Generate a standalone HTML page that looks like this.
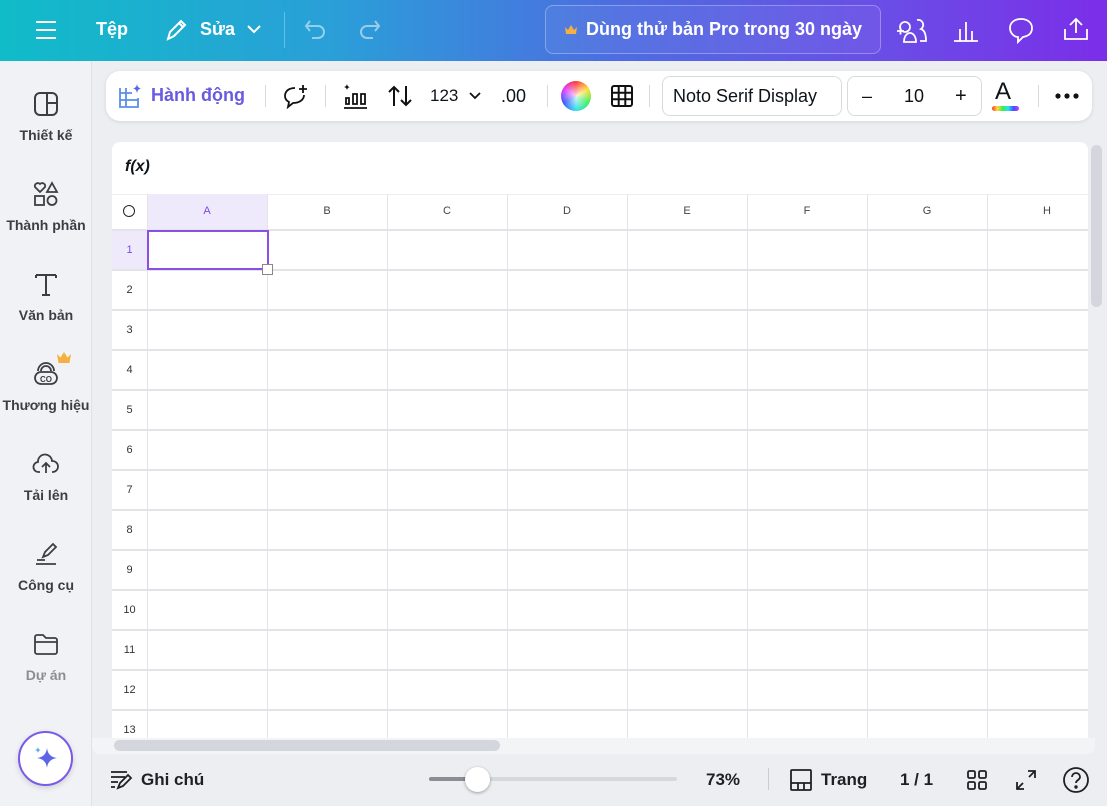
<!DOCTYPE html>
<html><head><meta charset="utf-8"><style>
*{box-sizing:border-box;margin:0;padding:0}
body{width:1107px;height:806px;overflow:hidden;background:#eceef2;font-family:"Liberation Sans","Noto Sans CJK SC",sans-serif;position:relative;color:#0e1318}
.abs{position:absolute}
.top{left:0;top:0;width:1107px;height:61px;background:linear-gradient(90deg,#10bcc8 0%,#2a9fd8 30%,#4c6ee0 55%,#6a4de6 80%,#7b2ee8 100%)}
.top .t{color:#fff;font-weight:bold;font-size:18px}
.side{left:0;top:61px;width:92px;height:745px;background:#f1f2f5;border-right:1px solid #dfe1e6}
.si{width:92px;text-align:center;font-size:14px;color:#3b3f45;font-weight:bold}
.si svg{display:block;margin:0 auto 10px}
.tb{left:106px;top:71px;width:986px;height:50px;background:#fff;border-radius:14px;box-shadow:0 1px 4px rgba(0,0,0,.1)}
.sep{width:1px;height:22px;background:#d8dadf;top:14px}
.card{left:112px;top:142px;width:976px;height:596px;background:#fff;border-radius:8px 8px 0 0;overflow:hidden}
.grid{left:0;top:87px;width:976px;height:520px;
background:repeating-linear-gradient(180deg,#e3e4e7 0 2px,transparent 2px 40px)}
.vl{top:52px;width:1px;height:560px;background:#e3e4e7}
.colh{top:52px;height:35px;width:120px;font-size:11px;color:#444;text-align:center;line-height:35px}
.rn{left:0;width:35px;font-size:11px;color:#333;text-align:center;height:40px;line-height:40px}
.bot{font-size:17px;font-weight:bold;color:#1d2126}
</style></head><body>
<div class="abs top">
 <svg class="abs" style="left:34px;top:19px" width="24" height="22"><path d="M2 3h20M2 11h20M2 19h20" stroke="#fff" stroke-width="2"/></svg>
 <div class="abs t" style="left:96px;top:19px">Tệp</div>
 <svg class="abs" style="left:164px;top:17px" width="24" height="26" fill="none" stroke="#fff" stroke-width="2"><path d="M4 22l2-7L17 4l4 4L10 19z M15 6l4 4"/></svg>
 <div class="abs t" style="left:200px;top:19px">Sửa</div>
 <svg class="abs" style="left:246px;top:24px" width="16" height="10" fill="none" stroke="#fff" stroke-width="2"><path d="M2 2l6 6 6-6"/></svg>
 <div class="abs" style="left:284px;top:12px;width:1px;height:36px;background:rgba(255,255,255,.3)"></div>
 <svg class="abs" style="left:303px;top:18px" width="26" height="24" fill="none" stroke="rgba(255,255,255,.5)" stroke-width="2"><path d="M7 3L3 8l4 5M3 8h12a6 6 0 010 12H9"/></svg>
 <svg class="abs" style="left:356px;top:18px" width="26" height="24" fill="none" stroke="rgba(255,255,255,.5)" stroke-width="2"><path d="M19 3l4 5-4 5M23 8H11a6 6 0 000 12h6"/></svg>
 <div class="abs" style="left:545px;top:5px;width:336px;height:49px;border:1px solid rgba(255,255,255,.3);border-radius:8px;background:rgba(255,255,255,.05)"></div>
 <svg class="abs" style="left:564px;top:24px" width="14" height="12"><path d="M1 3l3 3 3-5 3 5 3-3-1 7H2z" fill="#f5b040"/></svg>
 <div class="abs t" style="left:586px;top:19px">Dùng thử bản Pro trong 30 ngày</div>
 <svg class="abs" style="left:895px;top:15px" width="34" height="30" fill="none" stroke="#fff" stroke-width="1.8"><path d="M2 16h7M5.5 12.5v7M15 12a5 5 0 110-.1M9 27c0-6 3-9 6-9s6 3 6 9zM22 5a5 5 0 014 9c3 1 5 4 5 12h-6"/></svg>
 <svg class="abs" style="left:952px;top:16px" width="28" height="28" fill="none" stroke="#fff" stroke-width="1.8"><path d="M2 25h24M8 25V13M14 25V6M20 25V15"/></svg>
 <svg class="abs" style="left:1007px;top:16px" width="28" height="28" fill="none" stroke="#fff" stroke-width="1.8"><path d="M14 3C7 3 3 7 3 12s4 9 8 9v5l5-5c6-1 9-4 9-9S21 3 14 3z"/></svg>
 <svg class="abs" style="left:1062px;top:15px" width="28" height="28" fill="none" stroke="#fff" stroke-width="1.8"><path d="M14 18V4M8 10l6-6 6 6M3 14v10h22V14"/></svg>
</div>

<div class="abs side">
 <div class="abs si" style="top:30px"><svg width="26" height="26" fill="none" stroke="#3b3f45" stroke-width="2"><rect x="2" y="2" width="22" height="22" rx="5"/><path d="M14 2v22M14 12h10"/></svg>Thiết kế</div>
 <div class="abs si" style="top:120px"><svg width="26" height="26" fill="none" stroke="#3b3f45" stroke-width="1.8"><path d="M7 11L2 6a3 3 0 015-3 3 3 0 015 3z"/><path d="M19 2l5 9H14z"/><rect x="2" y="15" width="9" height="9"/><circle cx="19" cy="19.5" r="4.5"/></svg>Thành phần</div>
 <div class="abs si" style="top:210px"><svg width="26" height="26" fill="none" stroke="#3b3f45" stroke-width="2"><path d="M3 4h20M13 4v20M9 24h8M3 4v3M23 4v3"/></svg>Văn bản</div>
 <svg class="abs" style="left:56px;top:290px" width="16" height="14"><path d="M1 3l3.5 3.5L8 1l3.5 5.5L15 3l-1.5 9h-11z" fill="#f5b040"/></svg>
 <div class="abs si" style="top:300px;left:0"><svg width="26" height="26" fill="none" stroke="#3b3f45" stroke-width="1.8"><path d="M5 10a8 8 0 0116 0M8 10a5 5 0 0110 0"/><rect x="2" y="11" width="22" height="12" rx="6"/><text x="13" y="21" font-size="8" text-anchor="middle" fill="#3b3f45" stroke="none" font-weight="bold" font-family="Liberation Sans">CO</text></svg>Thương hiệu</div>
 <div class="abs si" style="top:390px"><svg width="28" height="26" fill="none" stroke="#3b3f45" stroke-width="1.8"><path d="M8 21H7a5 5 0 01-1-10 7 7 0 0114-1 5 5 0 011 11h-1"/><path d="M14 22v-9M10 16l4-4 4 4"/></svg>Tải lên</div>
 <div class="abs si" style="top:480px"><svg width="28" height="26" fill="none" stroke="#3b3f45" stroke-width="1.8"><path d="M11 16l2-5 8-8 3 3-8 8z"/><path d="M5 19h8M4 23h20"/></svg>Công cụ</div>
 <div class="abs si" style="top:570px;color:#8a8e94"><svg width="26" height="26" fill="none" stroke="#3b3f45" stroke-width="1.8"><path d="M2 6a2 2 0 012-2h6l3 3h9a2 2 0 012 2v12a2 2 0 01-2 2H4a2 2 0 01-2-2zM2 11h22"/></svg>Dự án</div>
 <div class="abs" style="left:18px;top:670px;width:55px;height:55px;border-radius:50%;background:#fff;border:2px solid #7a5ae8;box-shadow:0 2px 6px rgba(0,0,0,.15)"><svg style="margin:12px" width="28" height="28"><path d="M15 3q1 9 10 10q-9 1-10 10q-1-9-10-10q9-1 10-10z" fill="#5a66e6"/><path d="M6 2q.5 3 3 3q-2.5.5-3 3q-.5-2.5-3-3q2.5-.5 3-3z" fill="#5ab0e6"/></svg></div>
</div>

<div class="abs tb">
 <svg class="abs" style="left:12px;top:12px" width="26" height="26" fill="none" stroke="#5a8ee6" stroke-width="1.8"><path d="M2 5v19h18V15M2 10h12M2 17h18M8 5v19"/><path d="M19 1q.5 4 4 4.5q-3.5.5-4 4.5q-.5-4-4-4.5q3.5-.5 4-4.5z" fill="#5a66e6" stroke="none"/></svg>
 <div class="abs" style="left:45px;top:14px;font-size:18px;font-weight:bold;color:#6a5ae0">Hành động</div>
 <div class="abs sep" style="left:159px"></div>
 <svg class="abs" style="left:176px;top:12px" width="28" height="28" fill="none" stroke="#111" stroke-width="1.8"><path d="M13 5C7 5 3 8 3 13c0 3 2 5 4 6l-1 5 5-4c6 0 11-3 11-8"/><path d="M21 2v8M17 6h8"/></svg>
 <div class="abs sep" style="left:219px"></div>
 <svg class="abs" style="left:235px;top:11px" width="28" height="28" fill="none" stroke="#111" stroke-width="1.8"><path d="M3 26h23M5 22v-6h3v6zM12 22V12h4v10zM20 22V12h4v10z"/><path d="M6 2q.5 3 3 3q-2.5.5-3 3q-.5-2.5-3-3q2.5-.5 3-3z" fill="#111" stroke="none"/></svg>
 <svg class="abs" style="left:281px;top:13px" width="26" height="24" fill="none" stroke="#111" stroke-width="2"><path d="M7 22V3M2 8l5-5 5 5M19 2v19M14 16l5 5 5-5"/></svg>
 <div class="abs" style="left:324px;top:15px;font-size:17px">123</div>
 <svg class="abs" style="left:363px;top:21px" width="12" height="8" fill="none" stroke="#111" stroke-width="1.8"><path d="M1 1l5 5 5-5"/></svg>
 <div class="abs" style="left:395px;top:15px;font-size:18px">.00</div>
 <div class="abs sep" style="left:441px"></div>
 <div class="abs" style="left:455px;top:10px;width:30px;height:30px;border-radius:50%;background:conic-gradient(#f33,#fd3,#3e5,#3de,#35f,#d3f,#f33)"><div style="width:100%;height:100%;border-radius:50%;background:radial-gradient(circle,rgba(255,255,255,.8),rgba(255,255,255,0) 70%)"></div></div>
 <svg class="abs" style="left:504px;top:13px" width="24" height="24" fill="none" stroke="#111" stroke-width="2"><rect x="2" y="2" width="20" height="20" rx="2"/><path d="M8.7 2v20M15.3 2v20M2 8.7h20M2 15.3h20"/></svg>
 <div class="abs sep" style="left:543px"></div>
 <div class="abs" style="left:556px;top:5px;width:180px;height:40px;border:1px solid #d8dadf;border-radius:8px;font-size:18px;line-height:38px;padding-left:10px">Noto Serif Display</div>
 <div class="abs" style="left:741px;top:5px;width:135px;height:40px;border:1px solid #d8dadf;border-radius:8px;font-size:18px;line-height:38px">
  <span class="abs" style="left:14px">–</span><span class="abs" style="left:56px">10</span><span class="abs" style="left:107px;font-size:20px">+</span></div>
 <div class="abs" style="left:889px;top:8px;font-size:24px;line-height:26px">A</div>
 <div class="abs" style="left:886px;top:35px;width:27px;height:5px;border-radius:3px;background:linear-gradient(90deg,#f33,#fd3,#3e5,#3de,#35f,#d3f)"></div>
 <div class="abs sep" style="left:932px"></div>
 <svg class="abs" style="left:948px;top:21px" width="26" height="8"><circle cx="4" cy="4" r="2.6" fill="#111"/><circle cx="13" cy="4" r="2.6" fill="#111"/><circle cx="22" cy="4" r="2.6" fill="#111"/></svg>
</div>

<div class="abs card">
 <div class="abs" style="left:13px;top:16px;font-size:16px;font-style:italic;font-weight:bold">f(x)</div>
 <div class="abs" style="left:0;top:52px;width:976px;height:1px;background:#eee"></div>
 <div class="abs" style="left:11px;top:63px;width:12px;height:12px;border:1.5px solid #222;border-radius:50%"></div>
 <div class="abs colh" style="left:35px;background:#efe9fc;color:#7b4ae6">A</div>
 <div class="abs colh" style="left:155px">B</div>
 <div class="abs colh" style="left:275px">C</div>
 <div class="abs colh" style="left:395px">D</div>
 <div class="abs colh" style="left:515px">E</div>
 <div class="abs colh" style="left:635px">F</div>
 <div class="abs colh" style="left:755px">G</div>
 <div class="abs colh" style="left:875px">H</div>
 <div class="abs grid"></div>
 <div class="abs vl" style="left:35px"></div><div class="abs vl" style="left:155px"></div><div class="abs vl" style="left:275px"></div>
 <div class="abs vl" style="left:395px"></div><div class="abs vl" style="left:515px"></div><div class="abs vl" style="left:635px"></div>
 <div class="abs vl" style="left:755px"></div><div class="abs vl" style="left:875px"></div>
 <div class="abs" style="left:0;top:89px;width:35px;height:38px;background:#efe9fc"></div>
 <div class="abs rn" style="top:88px;color:#7b4ae6">1</div>
 <div class="abs rn" style="top:128px">2</div><div class="abs rn" style="top:168px">3</div><div class="abs rn" style="top:208px">4</div>
 <div class="abs rn" style="top:248px">5</div><div class="abs rn" style="top:288px">6</div><div class="abs rn" style="top:328px">7</div>
 <div class="abs rn" style="top:368px">8</div><div class="abs rn" style="top:408px">9</div><div class="abs rn" style="top:448px">10</div>
 <div class="abs rn" style="top:488px">11</div><div class="abs rn" style="top:528px">12</div><div class="abs rn" style="top:568px">13</div>
 <div class="abs" style="left:35px;top:88px;width:122px;height:40px;border:2px solid #8b4fe6"></div>
 <div class="abs" style="left:150px;top:122px;width:11px;height:11px;background:#fff;border:1px solid #888"></div>
</div>
<div class="abs" style="left:1091px;top:145px;width:11px;height:162px;background:#d3d7dd;border-radius:6px"></div>
<div class="abs" style="left:92px;top:738px;width:1003px;height:16px;background:#f3f4f6;border-radius:0 0 8px 8px"></div>
<div class="abs" style="left:114px;top:740px;width:386px;height:11px;background:#d3d7dd;border-radius:6px"></div>

<svg class="abs" style="left:109px;top:769px" width="26" height="22" fill="none" stroke="#1d2126" stroke-width="1.8"><path d="M2 3h16M2 8h14M2 13h7M2 18h4M9 19l2-5 8-8 3 3-8 8z"/></svg>
<div class="abs bot" style="left:141px;top:770px">Ghi chú</div>
<div class="abs" style="left:429px;top:777px;width:248px;height:4px;background:#d6d8dc;border-radius:2px"></div>
<div class="abs" style="left:429px;top:777px;width:48px;height:4px;background:#8a8e94;border-radius:2px"></div>
<div class="abs" style="left:465px;top:767px;width:25px;height:25px;border-radius:50%;background:#fff;box-shadow:0 1px 3px rgba(0,0,0,.35)"></div>
<div class="abs bot" style="left:706px;top:770px">73%</div>
<div class="abs" style="left:768px;top:768px;width:1px;height:22px;background:#ccc"></div>
<svg class="abs" style="left:789px;top:768px" width="24" height="24" fill="none" stroke="#1d2126" stroke-width="1.8"><rect x="2" y="2" width="20" height="20" rx="1"/><path d="M2 15h20M9 15v7M15 15v7"/></svg>
<div class="abs bot" style="left:821px;top:770px">Trang</div>
<div class="abs bot" style="left:900px;top:770px">1 / 1</div>
<svg class="abs" style="left:966px;top:769px" width="22" height="22" fill="none" stroke="#1d2126" stroke-width="1.8"><rect x="2" y="2" width="7" height="7" rx="1.5"/><rect x="13" y="2" width="7" height="7" rx="1.5"/><rect x="2" y="13" width="7" height="7" rx="1.5"/><rect x="13" y="13" width="7" height="7" rx="1.5"/></svg>
<svg class="abs" style="left:1014px;top:768px" width="24" height="24" fill="none" stroke="#1d2126" stroke-width="1.8"><path d="M14 3h7v7M21 3l-6 6M10 21H3v-7M3 21l6-6"/></svg>
<svg class="abs" style="left:1062px;top:766px" width="28" height="28" fill="none" stroke="#1d2126" stroke-width="1.8"><circle cx="14" cy="14" r="12"/><path d="M10 11a4 4 0 118 0c0 3-4 3-4 6"/><circle cx="14" cy="21" r=".8" fill="#1d2126"/></svg>
</body></html>
